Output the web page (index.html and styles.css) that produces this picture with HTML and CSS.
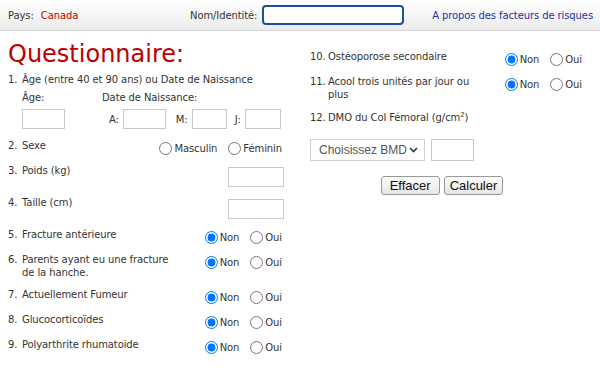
FILE: index.html
```html
<!DOCTYPE html>
<html lang="fr">
  <head>
    <meta charset="UTF-8" />
    <title>Questionnaire</title>
    <link rel="stylesheet" href="styles.css">
  </head>
  <body>
    <div class="topbar">
      <div class="country">Pays: <span class="countryName">Canada</span></div>
      <div class="ident">
        <label for="nom">Nom/Identité:</label>
        <input type="text" id="nom" class="nameInput">
      </div>
      <a class="riskLink" href="#">A propos des facteurs de risques</a>
    </div>

    <div class="main">
      <div class="col">
        <h1 class="title">Questionnaire:</h1>

        <div class="q q1">
          <span class="num">1.</span>
          <div class="qtext">Âge (entre 40 et 90 ans) ou Date de Naissance</div>
        </div>
        <div class="ageBlock">
          <div class="ageLabels">
            <span class="ageLbl">Âge:</span>
            <span>Date de Naissance:</span>
          </div>
          <div class="ageInputs">
            <input type="text" class="box ageBox">
            <label class="dlabel">A:</label><input type="text" class="box yBox">
            <label class="dlabel">M:</label><input type="text" class="box mBox">
            <label class="dlabel">J:</label><input type="text" class="box dBox">
          </div>
        </div>

        <div class="q">
          <span class="num">2.</span>
          <div class="qtext">Sexe</div>
          <div class="ctrl">
            <label class="opt"><input type="radio" name="sexe">Masculin</label>
            <label class="opt"><input type="radio" name="sexe">Féminin</label>
          </div>
        </div>

        <div class="q q-input">
          <span class="num">3.</span>
          <div class="qtext">Poids (kg)</div>
          <div class="ctrl"><input type="text" class="box wBox"></div>
        </div>

        <div class="q q-input">
          <span class="num">4.</span>
          <div class="qtext">Taille (cm)</div>
          <div class="ctrl"><input type="text" class="box wBox"></div>
        </div>

        <div class="q">
          <span class="num">5.</span>
          <div class="qtext">Fracture antérieure</div>
          <div class="ctrl">
            <label class="opt"><input type="radio" name="q5" checked>Non</label>
            <label class="opt"><input type="radio" name="q5">Oui</label>
          </div>
        </div>

        <div class="q">
          <span class="num">6.</span>
          <div class="qtext narrow">Parents ayant eu une fracture de la hanche.</div>
          <div class="ctrl">
            <label class="opt"><input type="radio" name="q6" checked>Non</label>
            <label class="opt"><input type="radio" name="q6">Oui</label>
          </div>
        </div>

        <div class="q">
          <span class="num">7.</span>
          <div class="qtext">Actuellement Fumeur</div>
          <div class="ctrl">
            <label class="opt"><input type="radio" name="q7" checked>Non</label>
            <label class="opt"><input type="radio" name="q7">Oui</label>
          </div>
        </div>

        <div class="q">
          <span class="num">8.</span>
          <div class="qtext">Glucocorticoïdes</div>
          <div class="ctrl">
            <label class="opt"><input type="radio" name="q8" checked>Non</label>
            <label class="opt"><input type="radio" name="q8">Oui</label>
          </div>
        </div>

        <div class="q">
          <span class="num">9.</span>
          <div class="qtext">Polyarthrite rhumatoide</div>
          <div class="ctrl">
            <label class="opt"><input type="radio" name="q9" checked>Non</label>
            <label class="opt"><input type="radio" name="q9">Oui</label>
          </div>
        </div>
      </div>

      <div class="col right">
        <div class="q">
          <span class="num wide">10.</span>
          <div class="qtext">Ostéoporose secondaire</div>
          <div class="ctrl">
            <label class="opt"><input type="radio" name="q10" checked>Non</label>
            <label class="opt"><input type="radio" name="q10">Oui</label>
          </div>
        </div>

        <div class="q">
          <span class="num wide">11.</span>
          <div class="qtext narrow">Acool trois unités par jour ou plus</div>
          <div class="ctrl">
            <label class="opt"><input type="radio" name="q11" checked>Non</label>
            <label class="opt"><input type="radio" name="q11">Oui</label>
          </div>
        </div>

        <div class="q q12">
          <span class="num wide">12.</span>
          <div class="qtext">DMO du Col Fémoral (g/cm<sup>2</sup>)</div>
        </div>

        <div class="bmdRow">
          <div class="selectWrap">
            <select class="bmdSelect">
              <option>Choisissez BMD</option>
            </select>
            <svg class="chevron" width="9" height="6" viewBox="0 0 9 6">
              <path d="M1 1 L4.5 4.5 L8 1" fill="none" stroke="#333" stroke-width="1.6"/>
            </svg>
          </div>
          <input type="text" class="box bmdBox">
        </div>

        <div class="buttons">
          <button class="btn btnClear">Effacer</button>
          <button class="btn">Calculer</button>
        </div>
      </div>
    </div>
  </body>
</html>
```

FILE: styles.css
```css
body {
  margin: 0;
  font-family: "DejaVu Sans", Verdana, sans-serif;
  font-size: 10px;
  letter-spacing: -0.1px;
  color: #333;
  background: #fff;
}

.topbar {
  display: flex;
  align-items: center;
  height: 30px;
  padding: 0 7px 0 8px;
  background: linear-gradient(#ffffff, #ebebeb);
  border-bottom: 1px solid #d6d6d6;
}

.country {
  width: 182px;
}
.countryName {
  color: #c00000;
  margin-left: 4px;
}

.ident {
  display: flex;
  align-items: center;
  gap: 5px;
}

.nameInput {
  width: 134px;
  height: 16px;
  border: 2px solid #1d4f9a;
  border-radius: 4px;
  padding: 0 2px;
  outline: none;
}

.riskLink {
  margin-left: auto;
  color: #2233a8;
  text-decoration: none;
}

.main {
  display: flex;
  gap: 26px;
  padding: 0 8px;
}

.col {
  width: 276px;
}
.col.right {
  width: 274px;
  padding-top: 19px;
}

.title {
  margin: 11px 0 7px;
  font-size: 24px;
  font-weight: normal;
  line-height: 24px;
  letter-spacing: 0;
  color: #c00000;
}

.q {
  display: flex;
  align-items: flex-start;
  line-height: 13px;
  margin-bottom: 9px;
}
.q1 {
  margin-bottom: 5px;
}
.q12 {
  padding-top: 1px;
}

.num {
  width: 14px;
  flex: none;
}
.num.wide {
  width: 18px;
}

.qtext {
  flex: 1;
}
.qtext.narrow {
  flex: none;
  width: 160px;
}

.ctrl {
  margin-left: auto;
  display: flex;
  gap: 11px;
  padding: 3px 2px 0 0;
}

.opt {
  display: flex;
  align-items: center;
}
.opt input {
  margin: 0 2px 0 0;
  width: 13px;
  height: 13px;
}

.q-input .ctrl {
  padding: 3px 0 0 0;
}

.box {
  height: 18px;
  border: 1px solid #c8c8c8;
  padding: 0 2px;
  box-sizing: content-box;
}

.ageBlock {
  padding-left: 14px;
  margin-bottom: 10px;
}
.ageLabels {
  display: flex;
  line-height: 13px;
}
.ageLbl {
  width: 80px;
}
.ageInputs {
  display: flex;
  align-items: center;
  margin-top: 5px;
}
.ageBox {
  width: 37px;
  margin-right: 44px;
}
.dlabel {
  margin-right: 4px;
}
.yBox {
  width: 37px;
  margin-right: 10px;
}
.mBox {
  width: 29px;
  margin-right: 8px;
}
.dBox {
  width: 30px;
}
.wBox {
  width: 50px;
}

sup {
  font-size: 7px;
  line-height: 0;
}

.bmdRow {
  display: flex;
  gap: 6px;
  margin-top: 15px;
}
.selectWrap {
  position: relative;
}
.bmdSelect {
  appearance: none;
  width: 115px;
  height: 22px;
  padding: 0 0 0 8px;
  font-family: "Liberation Sans", Arial, sans-serif;
  font-size: 12px;
  letter-spacing: 0;
  color: #555;
  border: 1px solid #d0d0d0;
  border-radius: 0;
  background: #fff;
}
.chevron {
  position: absolute;
  right: 7px;
  top: 8px;
}
.bmdBox {
  width: 37px;
  height: 20px;
}

.buttons {
  display: flex;
  justify-content: center;
  gap: 4px;
  margin-top: 15px;
  padding-right: 10px;
}
.btn {
  height: 19px;
  font-family: "Liberation Sans", Arial, sans-serif;
  font-size: 13px;
  letter-spacing: 0;
  padding: 0 5px;
  border: 1px solid #999;
  border-radius: 3px;
  background: linear-gradient(#fdfdfd, #e6e6e6);
  color: #111;
}
.btnClear {
  padding: 0 8px;
}
```
